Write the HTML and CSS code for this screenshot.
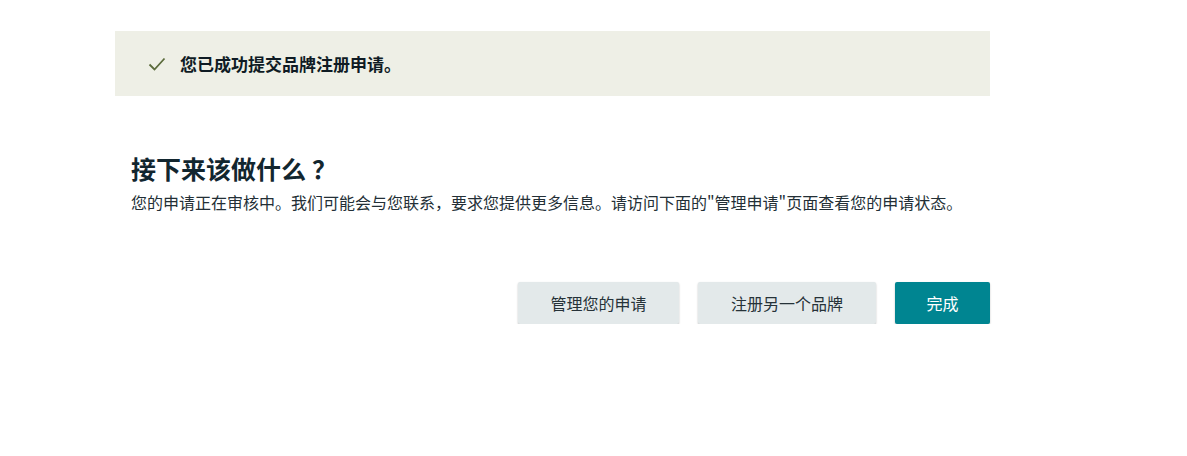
FILE: index.html
```html
<!DOCTYPE html>
<html lang="zh-CN">

<head>
  <meta charset="UTF-8">
  <meta name="viewport" content="width=device-width, initial-scale=1.0">
  <title>品牌注册</title>
  <link rel="stylesheet" href="styles.css">
</head>

<body>
  <div class="page">
    <div class="alert">
      <svg class="check" width="18" height="14" viewBox="0 0 18 14">
        <path d="M1.5 7.5 L6.5 12.5 L16.5 1.5" fill="none" stroke="#5b6b3c" stroke-width="1.8" />
      </svg>
      <span class="alert-text">您已成功提交品牌注册申请。</span>
    </div>

    <div class="next">
      <h2>接下来该做什么<span class="q">？</span></h2>
      <p>您的申请正在审核中。我们可能会与您联系，要求您提供更多信息。请访问下面的"管理申请"页面查看您的申请状态。</p>
    </div>

    <div class="actions">
      <button class="btn">管理您的申请</button>
      <button class="btn btn-wide">注册另一个品牌</button>
      <button class="btn btn-primary">完成</button>
    </div>
  </div>
</body>

</html>
```

FILE: styles.css
```css
body {
  margin: 0;
  font-family: "Noto Sans CJK SC", "Noto Sans", sans-serif;
  background-color: #fff;
  color: #232f3e;
}
.page {
  width: 875px;
  margin-left: 115px;
  padding-top: 31px;
}
.alert {
  background-color: #eeefe6;
  height: 65px;
  display: flex;
  align-items: center;
  padding-left: 33px;
  box-sizing: border-box;
}
.check {
  margin-right: 14px;
}
.alert-text {
  font-size: 17px;
  font-weight: bold;
  color: #0f1b24;
}
.next {
  padding: 56px 0 0 16px;
}
.next h2 {
  margin: 0;
  font-size: 25px;
  line-height: 32px;
  color: #12262f;
}
.q {
  margin-left: 6px;
}
.next p {
  margin: 6px 0 0;
  font-size: 16px;
  line-height: 24px;
  color: #232f36;
  white-space: nowrap;
}
.actions {
  display: flex;
  justify-content: flex-end;
  gap: 19px;
  margin-top: 68px;
}
.btn {
  font-family: inherit;
  font-size: 16px;
  height: 42px;
  width: 161px;
  border: none;
  border-radius: 2px;
  background-color: #e3e9ea;
  color: #263238;
  box-shadow: 0 1px 2px rgba(0, 0, 0, 0.25);
  cursor: pointer;
}
.btn-wide {
  width: 178px;
}
.btn-primary {
  width: 95px;
  background-color: #008591;
  color: #fff;
}
```
